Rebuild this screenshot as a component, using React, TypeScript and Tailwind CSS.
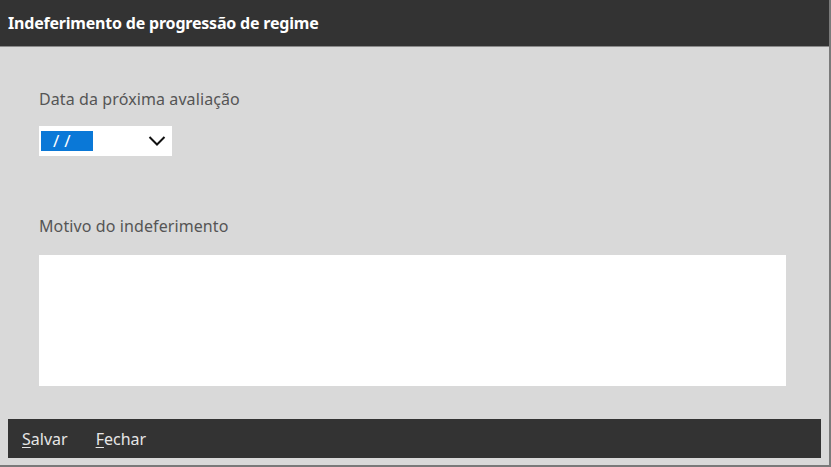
export default function App() {
  return (
    <div
      className="w-[831px] h-[467px] flex flex-col bg-[#d9d9d9] border-r-2 border-b-2 border-[#7a7a7a] overflow-hidden"
      style={{ fontFamily: '"Noto Sans", "Open Sans", sans-serif' }}
    >
      {/* Title bar */}
      <div className="h-[47px] shrink-0 bg-[#333333] flex items-center px-2 border-b border-[#8a8a8a]">
        <span className="text-white text-[16px] font-bold tracking-[-0.2px]">
          Indeferimento de progressão de regime
        </span>
      </div>

      {/* Form */}
      <div className="flex-1 flex flex-col pl-[39px] pr-[43px] pt-[42px]">
        <label className="text-[16px] text-[#555555] leading-5 tracking-[0.1px]">Data da próxima avaliação</label>
        <div className="mt-[17px] w-[133px] h-[30px] bg-white flex items-center pl-[2px] pr-[6px]">
          <div className="w-[52px] h-[20px] bg-[#0a78d7] text-white text-[17px] leading-5 pl-[12px] tracking-[5px]">
            //
          </div>
          <svg className="ml-auto" width="18" height="12" viewBox="0 0 18 12" fill="none">
            <path d="M1.5 2 L9 9.5 L16.5 2" stroke="#111" strokeWidth="2" />
          </svg>
        </div>

        <label className="mt-[60px] text-[16px] text-[#555555] leading-5 tracking-[0.1px]">Motivo do indeferimento</label>
        <div className="mt-[19px] h-[131px] bg-white" />
      </div>

      {/* Footer */}
      <div className="mx-2 mb-[7px] h-[39px] bg-[#333333] flex items-center gap-[28px] px-[14px] text-[16px] text-[#e6e6e6]">
        <span>
          <span className="underline underline-offset-2">S</span>alvar
        </span>
        <span>
          <span className="underline underline-offset-2">F</span>echar
        </span>
      </div>
    </div>
  );
}
